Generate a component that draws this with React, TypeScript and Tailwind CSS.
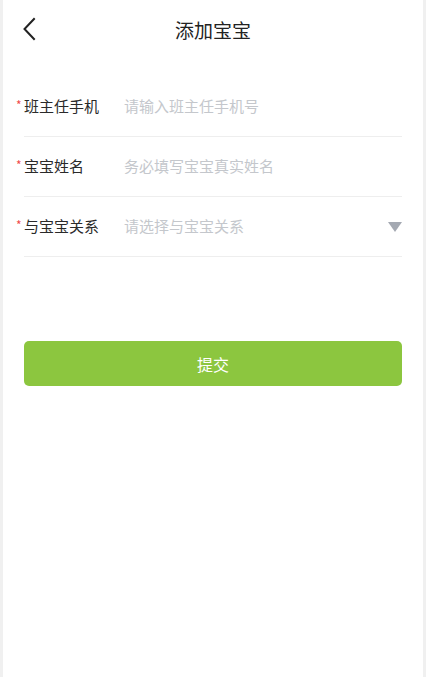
import React from 'react';

const fontCls = "font-['Noto_Sans_CJK_SC','Noto_Sans',sans-serif]";

const fields = [
  { label: '班主任手机', placeholder: '请输入班主任手机号', select: false },
  { label: '宝宝姓名', placeholder: '务必填写宝宝真实姓名', select: false },
  { label: '与宝宝关系', placeholder: '请选择与宝宝关系', select: true },
];

export default function App() {
  return (
    <div className={`w-[426px] h-[677px] bg-[#f0f0f0] px-[3px] ${fontCls}`}>
      <div className="h-full bg-white flex flex-col">
        {/* header */}
        <div className="relative h-[58px] flex items-center justify-center">
          <button className="absolute left-[17px] top-[17px] w-[18px] h-[24px] flex items-center justify-center">
            <svg width="14" height="24" viewBox="0 0 14 24" fill="none">
              <path d="M12 2 L2.5 12 L12 22" stroke="#222" strokeWidth="2" strokeLinecap="square" />
            </svg>
          </button>
          <h1 className="text-[19px] leading-none text-[#222]">添加宝宝</h1>
        </div>

        {/* form */}
        <div className="mt-[19px] px-[21px]">
          {fields.map((f) => (
            <div key={f.label} className="h-[60px] flex items-center border-b border-[#eeeeee] relative">
              <span className="absolute left-[-8px] top-[22px] text-[12px] leading-none text-[#f04b4b]">*</span>
              <span className="w-[100px] text-[15px] text-[#2a2a2a]">{f.label}</span>
              <span className="flex-1 text-[15px] text-[#c4c7cc]">{f.placeholder}</span>
              {f.select && (
                <svg width="14" height="10" viewBox="0 0 14 10">
                  <path d="M0 0 H14 L7 10 Z" fill="#a4a9b2" />
                </svg>
              )}
            </div>
          ))}
        </div>

        {/* submit */}
        <div className="px-[21px] mt-[84px]">
          <button className="w-full h-[45px] rounded-[5px] bg-[#8cc63f] text-white text-[16px]">
            提交
          </button>
        </div>
      </div>
    </div>
  );
}
